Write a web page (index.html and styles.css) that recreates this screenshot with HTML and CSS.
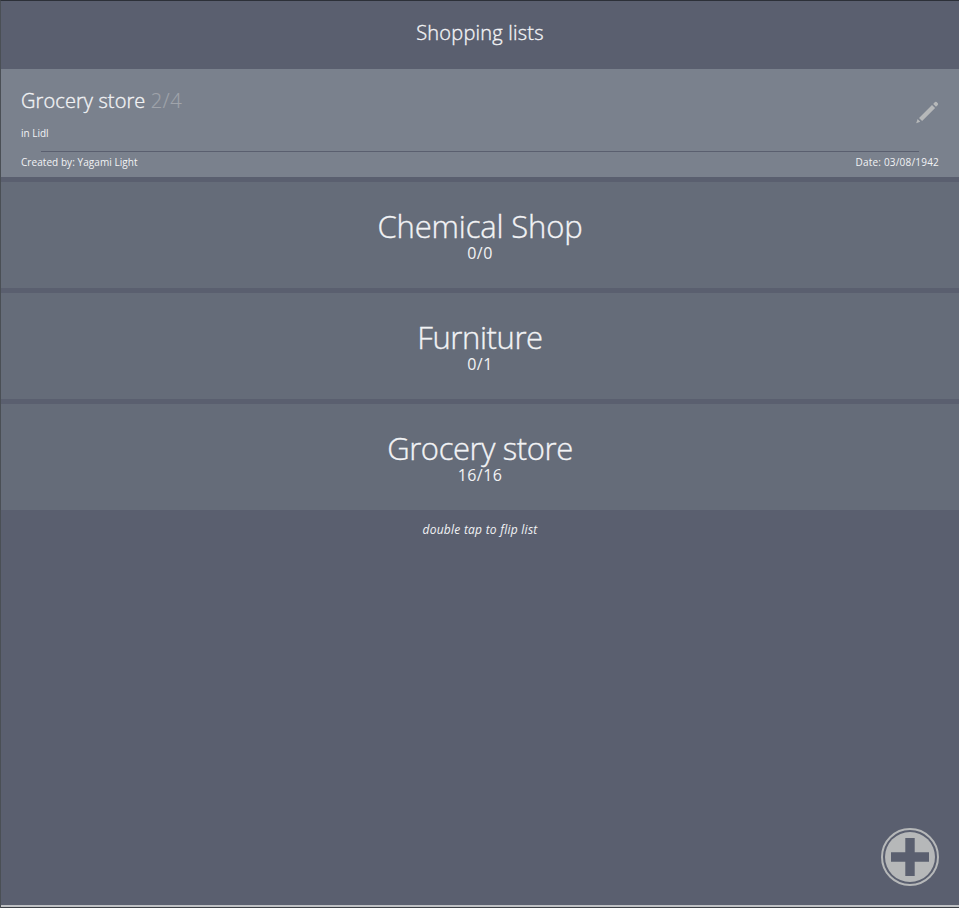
FILE: index.html
```html
<!DOCTYPE html>
<html lang="en">
<head>
<meta charset="utf-8">
<title>Shopping lists</title>
<link rel="stylesheet" href="styles.css">
</head>
<body>
<div class="app">
  <header class="header"><h1 class="title">Shopping lists</h1></header>
  <main class="lists">
    <section class="card details">
      <div class="top">
        <div>
          <h2 class="name"><span class="label">Grocery store</span> <span class="count">2/4</span></h2>
          <p class="place">in Lidl</p>
        </div>
        <svg class="pencil" viewBox="0 0 24 24" aria-hidden="true">
          <path d="M1.2 23.2 2.6 19.1 5.3 21.8ZM4 17.9 17 4.9 20.1 8 7.1 21ZM18.2 3.9 20 2.1Q20.8 1.4 21.6 2.1L22.8 3.3Q23.5 4.1 22.8 4.9L21 6.7Z"/>
        </svg>
      </div>
      <div class="rule"></div>
      <footer class="meta"><span class="author">Created by: Yagami Light</span><span class="date">Date: 03/08/1942</span></footer>
    </section>
    <section class="card front"><h2 class="shop chemical">Chemical Shop</h2><p class="tally">0/0</p></section>
    <section class="card front"><h2 class="shop furniture">Furniture</h2><p class="tally">0/1</p></section>
    <section class="card front"><h2 class="shop grocery">Grocery store</h2><p class="tally">16/16</p></section>
  </main>
  <p class="hint">double tap to flip list</p>
  <svg class="add" viewBox="0 0 58 58" role="img" aria-label="Add list">
    <circle class="ring" cx="29" cy="29" r="28"/>
    <circle class="disc" cx="29" cy="29" r="25"/>
    <path class="plus" d="M24.3 10h9.4v14.3H48v9.4H33.7V48h-9.4V33.7H10v-9.4h14.3Z"/>
  </svg>
</div>
</body>
</html>
```

FILE: styles.css
```css
* { box-sizing: border-box; }
body {
  margin: 0;
  background: #5a5f6f;
  color: #f2f3f5;
  font-family: "Open Sans", "Noto Sans", sans-serif;
}
h1, h2, p { margin: 0; font-weight: 400; white-space: nowrap; }
.app {
  position: relative;
  height: 908px;
  border: solid #4a4f55;
  border-width: 1px 0 0 1px;
  border-top-color: #2c3038;
  overflow: hidden;
}
.app::after {
  content: "";
  position: absolute;
  inset: auto 0 0 0;
  height: 2px;
  background: #bfc1c4;
  border-bottom: 1px solid #3c4046;
}
.header { height: 68px; padding-top: 18px; text-align: center; }
.title, .label, .shop { font-weight: 300; -webkit-text-stroke: 0.35px currentColor; }
.title { font-size: 20px; line-height: 28px; letter-spacing: 0.22px; }
.lists { display: grid; gap: 5px; }
.card { background: #656c79; }
.details { height: 108px; padding: 18px 20px 0; background: #7a818d; }
.top { display: flex; justify-content: space-between; height: 64px; }
.name { font-size: 20px; line-height: 28px; font-weight: 300; }
.label { letter-spacing: 0.1px; }
.count { color: #a0a4ab; letter-spacing: 0.7px; -webkit-text-stroke: 0.2px currentColor; }
.place { margin-top: 11px; font-size: 10px; line-height: 14px; }
.pencil { width: 24px; height: 24px; margin-top: 13px; fill: #b6b8b9; }
.rule { height: 1px; margin: 0 20px; background: #5a5f6f; }
.meta { display: flex; justify-content: space-between; margin-top: 3px; font-size: 10px; line-height: 14px; }
.author { letter-spacing: 0.06px; }
.date { letter-spacing: 0.2px; }
.front { height: 106px; padding-top: 26px; text-align: center; }
.shop { font-size: 31px; line-height: 36px; }
.chemical { letter-spacing: -0.15px; }
.furniture { letter-spacing: -0.4px; }
.grocery { letter-spacing: -0.4px; }
.tally { font-size: 16px; line-height: 18px; letter-spacing: 0.4px; }
.hint { margin-top: 12px; text-align: center; font-size: 12px; line-height: 16px; font-style: italic; letter-spacing: 0.25px; }
.add { position: absolute; right: 20px; bottom: 22px; width: 58px; height: 58px; }
.ring { fill: none; stroke: #b6b8b9; stroke-width: 2; }
.disc { fill: #b6b8b9; }
.plus { fill: #5a5f6f; }
```
